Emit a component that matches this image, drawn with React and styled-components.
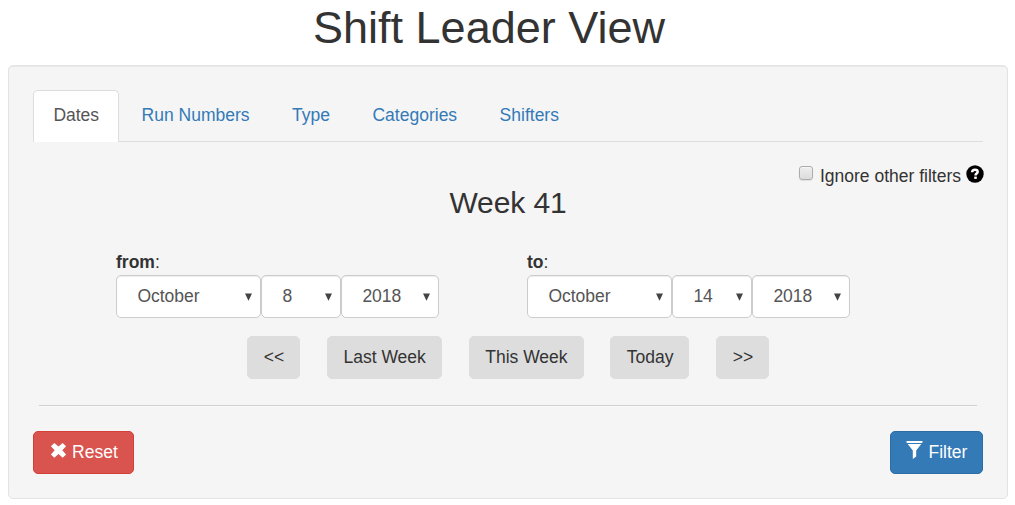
import React from "react";
import styled, { createGlobalStyle } from "styled-components";

const GlobalStyle = createGlobalStyle`
  *, *::before, *::after { box-sizing: border-box; }
  body {
    margin: 0;
    background: #fff;
    color: #333;
    font: 17.5px/25px "Liberation Sans", Arial, sans-serif;
    overflow: hidden;
  }
`;

const Page = styled.main`
  width: 1000px;
  margin-left: 8px;
`;

const Title = styled.h1`
  margin: 0;
  height: 65px;
  padding-top: 3px;
  padding-right: 38px;
  font-size: 45px;
  font-weight: 400;
  line-height: 50px;
  text-align: center;
`;

const Well = styled.section`
  height: 434px;
  padding: 24px;
  border: 1px solid #e3e3e3;
  border-radius: 5px;
  background: #f5f5f5;
  box-shadow: inset 0 1px 1px rgba(0, 0, 0, 0.05);
`;

const Tabs = styled.nav`
  display: flex;
  gap: 2.5px;
  height: 52px;
  border-bottom: 1px solid #ddd;
`;

const Tab = styled.a`
  height: 52px;
  padding: 12px 18.6px 12px 19.4px;
  border: 1px solid ${(p) => (p.$active ? "#ddd" : "transparent")};
  border-bottom: 0;
  border-radius: 5px 5px 0 0;
  background: ${(p) => (p.$active ? "#fff" : "transparent")};
  color: ${(p) => (p.$active ? "#555" : "#337ab7")};
`;

const IgnoreRow = styled.div`
  display: flex;
  justify-content: flex-end;
  height: 47px;
  padding-top: 21px;
`;

const IgnoreLabel = styled.span`
  padding-top: 1px;
`;

const Checkbox = styled.input`
  appearance: none;
  width: 14px;
  height: 14px;
  margin: 3px 7px 0 0;
  border: 1px solid #acacac;
  border-radius: 3px;
  background: linear-gradient(#eee, #dcdcdc);
  box-shadow: 0 1px 1px rgba(0, 0, 0, 0.08), inset 0 1px 1px #f7f7f7;
`;

const HelpIcon = styled.svg`
  width: 18px;
  height: 18px;
  margin: 2px -1px 0 5px;
`;

const WeekTitle = styled.h3`
  margin: 0;
  height: 61px;
  font-size: 30px;
  font-weight: 400;
  line-height: 27px;
  text-align: center;
  letter-spacing: -0.1px;
`;

const Ranges = styled.div`
  display: grid;
  grid-template-columns: 411px 411px;
  padding-left: 83px;
`;

const Selects = styled.div`
  display: flex;
`;

const Select = styled.div`
  display: flex;
  align-items: center;
  justify-content: space-between;
  width: ${(p) => p.$width}px;
  height: 43px;
  padding: 0 7px 1px 20.4px;
  border: 1px solid #ccc;
  border-radius: 5px;
  background: #fff;
  color: #555;
  box-shadow: inset 0 1px 1px rgba(0, 0, 0, 0.075);
`;

const Arrow = styled.svg`
  width: 9px;
  height: 8px;
  margin-top: 1px;
  fill: #444;
`;

const Shortcuts = styled.div`
  display: flex;
  justify-content: space-between;
  margin: 18px 214px 26px;
`;

const Button = styled.button`
  display: flex;
  align-items: center;
  justify-content: center;
  width: ${(p) => p.$width}px;
  height: 43px;
  padding: 0 0 1px 0.8px;
  border: 1px solid ${(p) => p.$edge || "#ddd"};
  border-radius: 5px;
  background: ${(p) => p.$fill || "#ddd"};
  color: ${(p) => (p.$fill ? "#fff" : "#333")};
  font: inherit;
`;

const Divider = styled.hr`
  height: 2px;
  margin: 0 6px;
  border: 0;
  border-top: 1px solid #d0d0d0;
  border-bottom: 1px solid #fafafa;
`;

const Actions = styled.div`
  display: flex;
  justify-content: space-between;
  margin-top: 24px;
`;

const ButtonIcon = styled.svg`
  width: 17px;
  height: 18px;
  margin: -5px 5px 0 0;
  fill: #fff;
`;

function DateRange({ label, day }) {
  return (
    <div>
      <div><b>{label}</b>:</div>
      <Selects>
        {[["October", 145], [day, 80], ["2018", 98]].map(([text, width]) => (
          <Select key={text} $width={width}>
            {text}
            <Arrow viewBox="0 0 9 8"><path d="M1 .5h7L4.5 7.7z" /></Arrow>
          </Select>
        ))}
      </Selects>
    </div>
  );
}

export default function App() {
  return (
    <>
      <GlobalStyle />
      <Page>
        <Title>Shift Leader View</Title>
        <Well>
          <Tabs>
            {["Dates", "Run Numbers", "Type", "Categories", "Shifters"].map((name, i) => (
              <Tab key={name} $active={i === 0}>{name}</Tab>
            ))}
          </Tabs>
          <IgnoreRow>
            <Checkbox type="checkbox" aria-label="Ignore other filters" />
            <IgnoreLabel>Ignore other filters</IgnoreLabel>
            <HelpIcon viewBox="0 0 18 18">
              <circle cx="9" cy="9" r="8.7" fill="#000" />
              <path d="M6.1 7.3C6.2 5.1 7.3 4.7 9 4.7c1.8 0 2.7.7 2.7 2.1 0 1.8-2.2 1.7-2.2 3.6" fill="none" stroke="#fff" strokeWidth="2.5" />
              <path d="M8.2 11.6h2.6v2.3H8.2z" fill="#fff" />
            </HelpIcon>
          </IgnoreRow>
          <WeekTitle>Week 41</WeekTitle>
          <Ranges>
            <DateRange label="from" day="8" />
            <DateRange label="to" day="14" />
          </Ranges>
          <Shortcuts>
            <Button $width={53}>&lt;&lt;</Button>
            <Button $width={115}>Last Week</Button>
            <Button $width={115}>This Week</Button>
            <Button $width={79}>Today</Button>
            <Button $width={53}>&gt;&gt;</Button>
          </Shortcuts>
          <Divider />
          <Actions>
            <Button $width={101} $fill="#d9534f" $edge="#d43f3a">
              <ButtonIcon viewBox="0 0 17 18">
                <path d="M4.3 1.9 8.5 5.6l4.2-3.7 3.4 3.3-3.8 4.1 3.8 4.1-3.4 3.3-4.2-3.7-4.2 3.7-3.4-3.3 3.8-4.1-3.8-4.1z" />
              </ButtonIcon>
              Reset
            </Button>
            <Button $width={93} $fill="#337ab7" $edge="#2e6da4">
              <ButtonIcon viewBox="0 0 17 18">
                <path d="M.5 0h16v1.4L15.8 2H1.2L.5 1.4zM1.7 3h13.6L10.2 9.4v6L6.8 18V9.4z" />
              </ButtonIcon>
              Filter
            </Button>
          </Actions>
        </Well>
      </Page>
    </>
  );
}
